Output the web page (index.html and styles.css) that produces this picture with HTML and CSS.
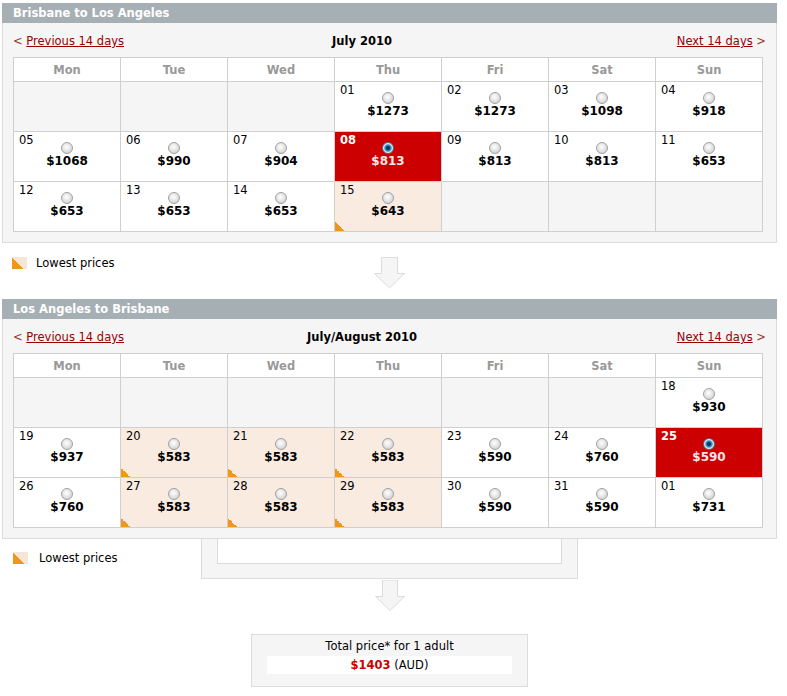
FILE: index.html
```html
<!DOCTYPE html>
<html lang="en">
<head>
    <meta charset="UTF-8">
    <title>Select your flights</title>
    <link rel="stylesheet" href="styles.css">
</head>
<body>
<div class="page">

    <section class="leg">
        <h2 class="leg-title">Brisbane to Los Angeles</h2>
        <div class="leg-body">
            <div class="cal-nav">
                <span class="nav-prev">&lt; <a href="#">Previous 14 days</a></span>
                <span class="nav-month">July 2010</span>
                <span class="nav-next"><a href="#">Next 14 days</a> &gt;</span>
            </div>
            <table class="cal">
                <tr><th>Mon</th><th>Tue</th><th>Wed</th><th>Thu</th><th>Fri</th><th>Sat</th><th>Sun</th></tr>
                <tr>
                    <td class="empty"></td>
                    <td class="empty"></td>
                    <td class="empty"></td>
                    <td><div class="cell"><span class="day">01</span><span class="fare"><span class="radio"></span><b class="price">$1273</b></span></div></td>
                    <td><div class="cell"><span class="day">02</span><span class="fare"><span class="radio"></span><b class="price">$1273</b></span></div></td>
                    <td><div class="cell"><span class="day">03</span><span class="fare"><span class="radio"></span><b class="price">$1098</b></span></div></td>
                    <td><div class="cell"><span class="day">04</span><span class="fare"><span class="radio"></span><b class="price">$918</b></span></div></td>
                </tr>
                <tr>
                    <td><div class="cell"><span class="day">05</span><span class="fare"><span class="radio"></span><b class="price">$1068</b></span></div></td>
                    <td><div class="cell"><span class="day">06</span><span class="fare"><span class="radio"></span><b class="price">$990</b></span></div></td>
                    <td><div class="cell"><span class="day">07</span><span class="fare"><span class="radio"></span><b class="price">$904</b></span></div></td>
                    <td class="sel"><div class="cell"><span class="day">08</span><span class="fare"><span class="radio"></span><b class="price">$813</b></span></div></td>
                    <td><div class="cell"><span class="day">09</span><span class="fare"><span class="radio"></span><b class="price">$813</b></span></div></td>
                    <td><div class="cell"><span class="day">10</span><span class="fare"><span class="radio"></span><b class="price">$813</b></span></div></td>
                    <td><div class="cell"><span class="day">11</span><span class="fare"><span class="radio"></span><b class="price">$653</b></span></div></td>
                </tr>
                <tr>
                    <td><div class="cell"><span class="day">12</span><span class="fare"><span class="radio"></span><b class="price">$653</b></span></div></td>
                    <td><div class="cell"><span class="day">13</span><span class="fare"><span class="radio"></span><b class="price">$653</b></span></div></td>
                    <td><div class="cell"><span class="day">14</span><span class="fare"><span class="radio"></span><b class="price">$653</b></span></div></td>
                    <td class="low"><div class="cell"><span class="day">15</span><span class="fare"><span class="radio"></span><b class="price">$643</b></span></div></td>
                    <td class="empty"></td>
                    <td class="empty"></td>
                    <td class="empty"></td>
                </tr>
            </table>
        </div>
    </section>

    <div class="between">
        <div class="legend"><span class="legend-icon"></span>Lowest prices</div>
        <svg class="arrow" width="32" height="32" viewBox="0 0 32 32">
            <path d="M7.5 0.5 H23.5 V16.5 H30.5 L15.5 31 L0.5 16.5 H7.5 Z" fill="#f5f5f5" stroke="#dcdcdc"/>
        </svg>
    </div>

    <section class="leg">
        <h2 class="leg-title">Los Angeles to Brisbane</h2>
        <div class="leg-body">
            <div class="cal-nav">
                <span class="nav-prev">&lt; <a href="#">Previous 14 days</a></span>
                <span class="nav-month">July/August 2010</span>
                <span class="nav-next"><a href="#">Next 14 days</a> &gt;</span>
            </div>
            <table class="cal">
                <tr><th>Mon</th><th>Tue</th><th>Wed</th><th>Thu</th><th>Fri</th><th>Sat</th><th>Sun</th></tr>
                <tr>
                    <td class="empty"></td>
                    <td class="empty"></td>
                    <td class="empty"></td>
                    <td class="empty"></td>
                    <td class="empty"></td>
                    <td class="empty"></td>
                    <td><div class="cell"><span class="day">18</span><span class="fare"><span class="radio"></span><b class="price">$930</b></span></div></td>
                </tr>
                <tr>
                    <td><div class="cell"><span class="day">19</span><span class="fare"><span class="radio"></span><b class="price">$937</b></span></div></td>
                    <td class="low"><div class="cell"><span class="day">20</span><span class="fare"><span class="radio"></span><b class="price">$583</b></span></div></td>
                    <td class="low"><div class="cell"><span class="day">21</span><span class="fare"><span class="radio"></span><b class="price">$583</b></span></div></td>
                    <td class="low"><div class="cell"><span class="day">22</span><span class="fare"><span class="radio"></span><b class="price">$583</b></span></div></td>
                    <td><div class="cell"><span class="day">23</span><span class="fare"><span class="radio"></span><b class="price">$590</b></span></div></td>
                    <td><div class="cell"><span class="day">24</span><span class="fare"><span class="radio"></span><b class="price">$760</b></span></div></td>
                    <td class="sel"><div class="cell"><span class="day">25</span><span class="fare"><span class="radio"></span><b class="price">$590</b></span></div></td>
                </tr>
                <tr>
                    <td><div class="cell"><span class="day">26</span><span class="fare"><span class="radio"></span><b class="price">$760</b></span></div></td>
                    <td class="low"><div class="cell"><span class="day">27</span><span class="fare"><span class="radio"></span><b class="price">$583</b></span></div></td>
                    <td class="low"><div class="cell"><span class="day">28</span><span class="fare"><span class="radio"></span><b class="price">$583</b></span></div></td>
                    <td class="low"><div class="cell"><span class="day">29</span><span class="fare"><span class="radio"></span><b class="price">$583</b></span></div></td>
                    <td><div class="cell"><span class="day">30</span><span class="fare"><span class="radio"></span><b class="price">$590</b></span></div></td>
                    <td><div class="cell"><span class="day">31</span><span class="fare"><span class="radio"></span><b class="price">$590</b></span></div></td>
                    <td><div class="cell"><span class="day">01</span><span class="fare"><span class="radio"></span><b class="price">$731</b></span></div></td>
                </tr>
            </table>
        </div>
    </section>

    <div class="after">
        <div class="legend legend-bottom"><span class="legend-icon"></span>Lowest prices</div>
        <div class="bracket"><div class="bracket-inner"></div></div>
    </div>

    <svg class="arrow arrow-total" width="32" height="31" viewBox="0 0 32 31">
        <path d="M8.5 0 H23.5 V16.5 H30.5 L16 30.5 L1.5 16.5 H8.5 Z" fill="#f5f5f5" stroke="#dcdcdc"/>
    </svg>

    <div class="total">
        <div class="total-label">Total price* for 1 adult</div>
        <div class="total-value"><b class="total-price">$1403</b> (AUD)</div>
    </div>

</div>
</body>
</html>
```

FILE: styles.css
```css
* {
    box-sizing: border-box;
}

body {
    margin: 0;
    background-color: #fff;
    color: #000;
    font-family: "DejaVu Sans", Verdana, sans-serif;
    font-size: 11.5px;
}

.page {
    width: 775px;
    margin-left: 2px;
    padding-top: 3px;
}

.leg-title {
    margin: 0;
    height: 20px;
    padding-left: 11px;
    background-color: #a6afb4;
    color: #fff;
    font-size: 11.5px;
    font-weight: bold;
    line-height: 20px;
}

.leg-body {
    border: 1px solid #dcdcdc;
    border-top: 0;
    background-color: #f5f5f5;
    padding: 0 13px 10px 10px;
}

.cal-nav {
    display: grid;
    grid-template-columns: 249px 200px 1fr;
    align-items: center;
    height: 34px;
    padding-top: 2px;
    margin-right: -3px;
}

.cal-nav a {
    color: #990000;
}

.nav-prev,
.nav-next {
    color: #993333;
}

.nav-month {
    text-align: center;
    font-weight: bold;
}

.nav-next {
    text-align: right;
}

.cal {
    width: 750px;
    table-layout: fixed;
    border-collapse: collapse;
    background-color: #fff;
}

.cal th {
    height: 24px;
    padding: 0;
    border: 1px solid #cfcfcf;
    color: #999;
    font-weight: bold;
}

.cal td {
    height: 50px;
    padding: 0;
    border: 1px solid #cfcfcf;
    vertical-align: top;
}

.cal td.empty {
    background-color: #f5f5f5;
}

.cal td.low {
    background: linear-gradient(to top right, #f0961a 50%, transparent 50%) left bottom / 9px 9px no-repeat, #f9ebe0;
}

.cal td.sel {
    background-color: #cc0000;
}

.cell {
    display: grid;
    height: 49px;
}

.day,
.fare {
    grid-area: 1 / 1;
}

.day {
    justify-self: start;
    padding: 2px 0 0 5px;
    line-height: 13px;
}

.fare {
    justify-self: center;
    display: flex;
    flex-direction: column;
    align-items: center;
    padding-top: 10px;
}

.radio {
    width: 12px;
    height: 12px;
    border-radius: 50%;
    border: 1px solid #a2a2a2;
    background: radial-gradient(circle at 45% 40%, #fff 0, #e6e6e6 45%, #c6c6c6 100%);
}

.price {
    font-size: 12px;
    line-height: 14px;
}

.sel .day {
    color: #fff;
    font-weight: bold;
}

.sel .price {
    color: #fde6e6;
}

.sel .radio {
    border-color: #55636e;
    background: radial-gradient(circle, #0b3656 0 1.5px, #1d7fc0 2.5px, #6fb0dc 3.5px, #e4edf3 4.5px);
}

.between {
    display: grid;
    grid-template-columns: 362px 32px;
    height: 56px;
    padding: 14px 0 0 10px;
}

.legend {
    display: flex;
    align-items: center;
    gap: 9px;
    height: 12px;
}

.legend-icon {
    width: 15px;
    height: 12px;
    background: linear-gradient(to top right, #f0961a 50%, transparent 50%) left bottom / 12px 12px no-repeat, #f7e6d6;
}

.after {
    display: grid;
    grid-template-columns: 1fr 377px 1fr;
}

.legend-bottom {
    margin: 13px 0 0 11px;
    gap: 11px;
}

.bracket {
    height: 40px;
    padding: 0 15px 14px;
    border: 1px solid #dcdcdc;
    border-top: 0;
    background-color: #f5f5f5;
}

.bracket-inner {
    height: 25px;
    border: 1px solid #dcdcdc;
    border-top: 0;
    background-color: #fff;
}

.arrow {
    display: block;
}

.arrow-total {
    margin: 1px auto 0 372px;
}

.total {
    width: 277px;
    margin: 23px auto 0;
    padding: 3px 15px 12px;
    border: 1px solid #dcdcdc;
    background-color: #f5f5f5;
    text-align: center;
}

.total-label {
    line-height: 17px;
    margin-bottom: 1px;
}

.total-value {
    height: 18px;
    line-height: 18px;
    background-color: #fff;
}

.total-price {
    color: #cc0000;
}
```
